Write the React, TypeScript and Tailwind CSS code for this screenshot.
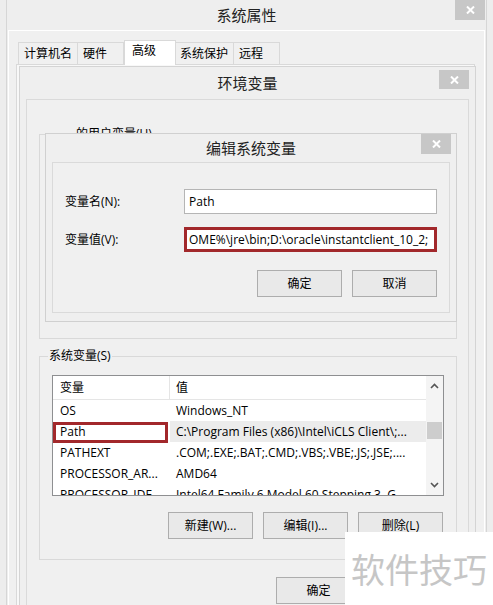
import React from 'react'

const font = "font-['Open_Sans','Noto_Sans_CJK_SC',sans-serif]"

function CloseBtn({ className }: { className: string }) {
  return (
    <div className={`absolute flex items-center justify-center bg-[#c7c7c7] ${className}`}>
      <svg width="9" height="8" viewBox="0 0 9 8">
        <path d="M1 0.5L8 7.5M8 0.5L1 7.5" stroke="#fff" strokeWidth="2" />
      </svg>
    </div>
  )
}

function Btn({ children, className = '' }: { children?: React.ReactNode; className?: string }) {
  return (
    <div
      className={`h-[27px] w-[85px] border border-[#adadad] bg-[#e9e9e9] flex items-center justify-center text-[12px] text-black ${className}`}
    >
      {children}
    </div>
  )
}

const rows = [
  ['OS', 'Windows_NT'],
  ['Path', 'C:\\Program Files (x86)\\Intel\\iCLS Client\\;...'],
  ['PATHEXT', '.COM;.EXE;.BAT;.CMD;.VBS;.VBE;.JS;.JSE;....'],
  ['PROCESSOR_AR...', 'AMD64'],
  ['PROCESSOR_IDE...', 'Intel64 Family 6 Model 60 Stepping 3, G'],
]

export default function App() {
  return (
    <div className={`relative w-[493px] h-[605px] overflow-hidden bg-[#ededed] text-[12px] text-black ${font}`}>
      {/* 系统属性 */}
      <div className="absolute left-[6px] top-0 w-[481px] h-[660px] border-x border-[#d6d6d6] bg-[#eeeeee]">
        <div className="h-[30px] flex items-center justify-center text-[15px] text-[#222]">系统属性</div>
        <CloseBtn className="right-[1px] top-0 w-[30px] h-[20px]" />
        <div className="mx-[1px] h-full border border-white bg-[#f0f0f0] pt-[9px] pl-[7px] pr-[9px]">
          <div className="flex items-end h-[24px] ml-[2px]">
            <div className="h-[22px] w-[60px] border border-b-0 border-[#d9d9d9] bg-[#f0f0f0] pl-[5px] leading-[22px]">计算机名</div>
            <div className="h-[22px] w-[46px] border border-b-0 border-l-0 border-[#d9d9d9] bg-[#f0f0f0] pl-[5px] leading-[22px]">硬件</div>
            <div className="relative z-10 -mb-px h-[25px] w-[52px] border border-b-0 border-[#d9d9d9] bg-white pl-[7px] leading-[20px]">高级</div>
            <div className="h-[22px] w-[58px] border border-b-0 border-l-0 border-[#d9d9d9] bg-[#f0f0f0] pl-[4px] leading-[22px]">系统保护</div>
            <div className="h-[22px] w-[46px] border border-b-0 border-l-0 border-[#d9d9d9] bg-[#f0f0f0] pl-[5px] leading-[22px]">远程</div>
          </div>
          <div className="h-[560px] border border-[#d9d9d9] bg-[#f8f8f8]" />
        </div>
      </div>

      {/* 环境变量 */}
      <div className="absolute left-[19px] top-[66px] w-[457px] h-[600px] border border-[#d4d4d4] bg-[#efefef]">
        <div className="h-[32px] flex items-center justify-center text-[15px] text-[#222]">环境变量</div>
        <CloseBtn className="right-[6px] top-[3px] w-[30px] h-[19px]" />
        <div className="mx-[6px] h-full border border-[#dadada] bg-[#f0f0f0] pt-[34px] pl-[12px] pr-[11px]">
          <div className="relative h-[205px] border border-[#d9d9d9]">
            <div className="absolute left-[35px] -top-[9px] bg-[#f0f0f0] px-[1px] leading-[16px]">的用户变量(U)</div>
          </div>

          <div className="relative mt-[17px] h-[204px] border border-[#d9d9d9] pt-[18px] px-[12px]">
            <div className="absolute left-[8px] -top-[9px] bg-[#f0f0f0] px-[1px] leading-[16px]">系统变量(S)</div>
            <div className="flex h-[121px] border border-[#8e8f91] bg-white overflow-hidden">
              <div className="flex-1 flex flex-col">
                <div className="flex h-[24px] shrink-0 border-b border-[#e5e5e5] items-center">
                  <div className="w-[117px] h-full border-r border-[#e5e5e5] pl-[7px] leading-[23px]">变量</div>
                  <div className="pl-[6px]">值</div>
                </div>
                {rows.map(([k, v]) => (
                  <div key={k} className={`relative flex h-[21px] shrink-0 items-center ${k === 'Path' ? 'bg-[#ececec]' : ''}`}>
                    <div className={`w-[117px] h-full pl-[7px] leading-[21px] whitespace-nowrap ${k === 'Path' ? 'bg-white' : ''}`}>{k}</div>
                    <div className="pl-[6px] whitespace-nowrap">{v}</div>
                    {k === 'Path' && (
                      <div className="absolute left-0 top-[1px] w-[115px] h-[21px] border-[3px] border-[#a2282b]" />
                    )}
                  </div>
                ))}
              </div>
              <div className="w-[17px] flex flex-col items-center bg-[#f4f4f4]">
                <div className="h-[20px] flex items-center justify-center">
                  <svg width="9" height="6" viewBox="0 0 9 6"><path d="M1 5L4.5 1.5L8 5" stroke="#555" strokeWidth="1.6" fill="none" /></svg>
                </div>
                <div className="mt-[26px] h-[17px] w-[15px] bg-[#cdcdcd]" />
                <div className="flex-1" />
                <div className="h-[20px] flex items-center justify-center">
                  <svg width="9" height="6" viewBox="0 0 9 6"><path d="M1 1L4.5 4.5L8 1" stroke="#555" strokeWidth="1.6" fill="none" /></svg>
                </div>
              </div>
            </div>
            <div className="mt-[16px] flex justify-end gap-[10px] pr-[1px]">
              <Btn>新建(W)...</Btn>
              <Btn>编辑(I)...</Btn>
              <Btn>删除(L)</Btn>
            </div>
          </div>

          {/* bottom buttons; the second one sits under the watermark */}
          <div className="mt-[17px] flex justify-end gap-[10px] pr-[1px]">
            <Btn>确定</Btn>
            <Btn />
          </div>
        </div>
      </div>

      {/* 编辑系统变量 */}
      <div className="absolute left-[45px] top-[133px] w-[412px] h-[189px] border border-[#d0d0d0] bg-[#efefef]">
        <div className="h-[28px] flex items-center justify-center text-[15px] text-[#222]">编辑系统变量</div>
        <CloseBtn className="right-[5px] top-0 w-[30px] h-[20px]" />
        <div className="mx-[6px] h-[151px] border border-[#dadada] bg-[#f0f0f0] pt-[26px] pl-[12px] pr-[12px]">
          <div className="flex items-center h-[25px]">
            <div className="w-[119px]">变量名(N):</div>
            <div className="flex-1 h-full border border-[#b5b5b5] bg-white pl-[4px] leading-[23px]">Path</div>
          </div>
          <div className="mt-[13px] flex items-center h-[25px]">
            <div className="w-[119px]">变量值(V):</div>
            <div className="flex-1 h-full border-[3px] border-[#a2282b] bg-white pl-[2px] leading-[19px] whitespace-nowrap overflow-hidden">
              OME%\jre\bin;D:\oracle\instantclient_10_2;
            </div>
          </div>
          <div className="mt-[18px] flex justify-end gap-[10px]">
            <Btn>确定</Btn>
            <Btn>取消</Btn>
          </div>
        </div>
      </div>

      {/* watermark */}
      <div className="absolute left-[345px] top-[532px] w-[148px] h-[73px] bg-white flex items-center justify-center">
        <span className="text-[34px] leading-none text-[#c6c6c6] font-['Noto_Sans_CJK_SC',sans-serif]">软件技巧</span>
      </div>
    </div>
  )
}
